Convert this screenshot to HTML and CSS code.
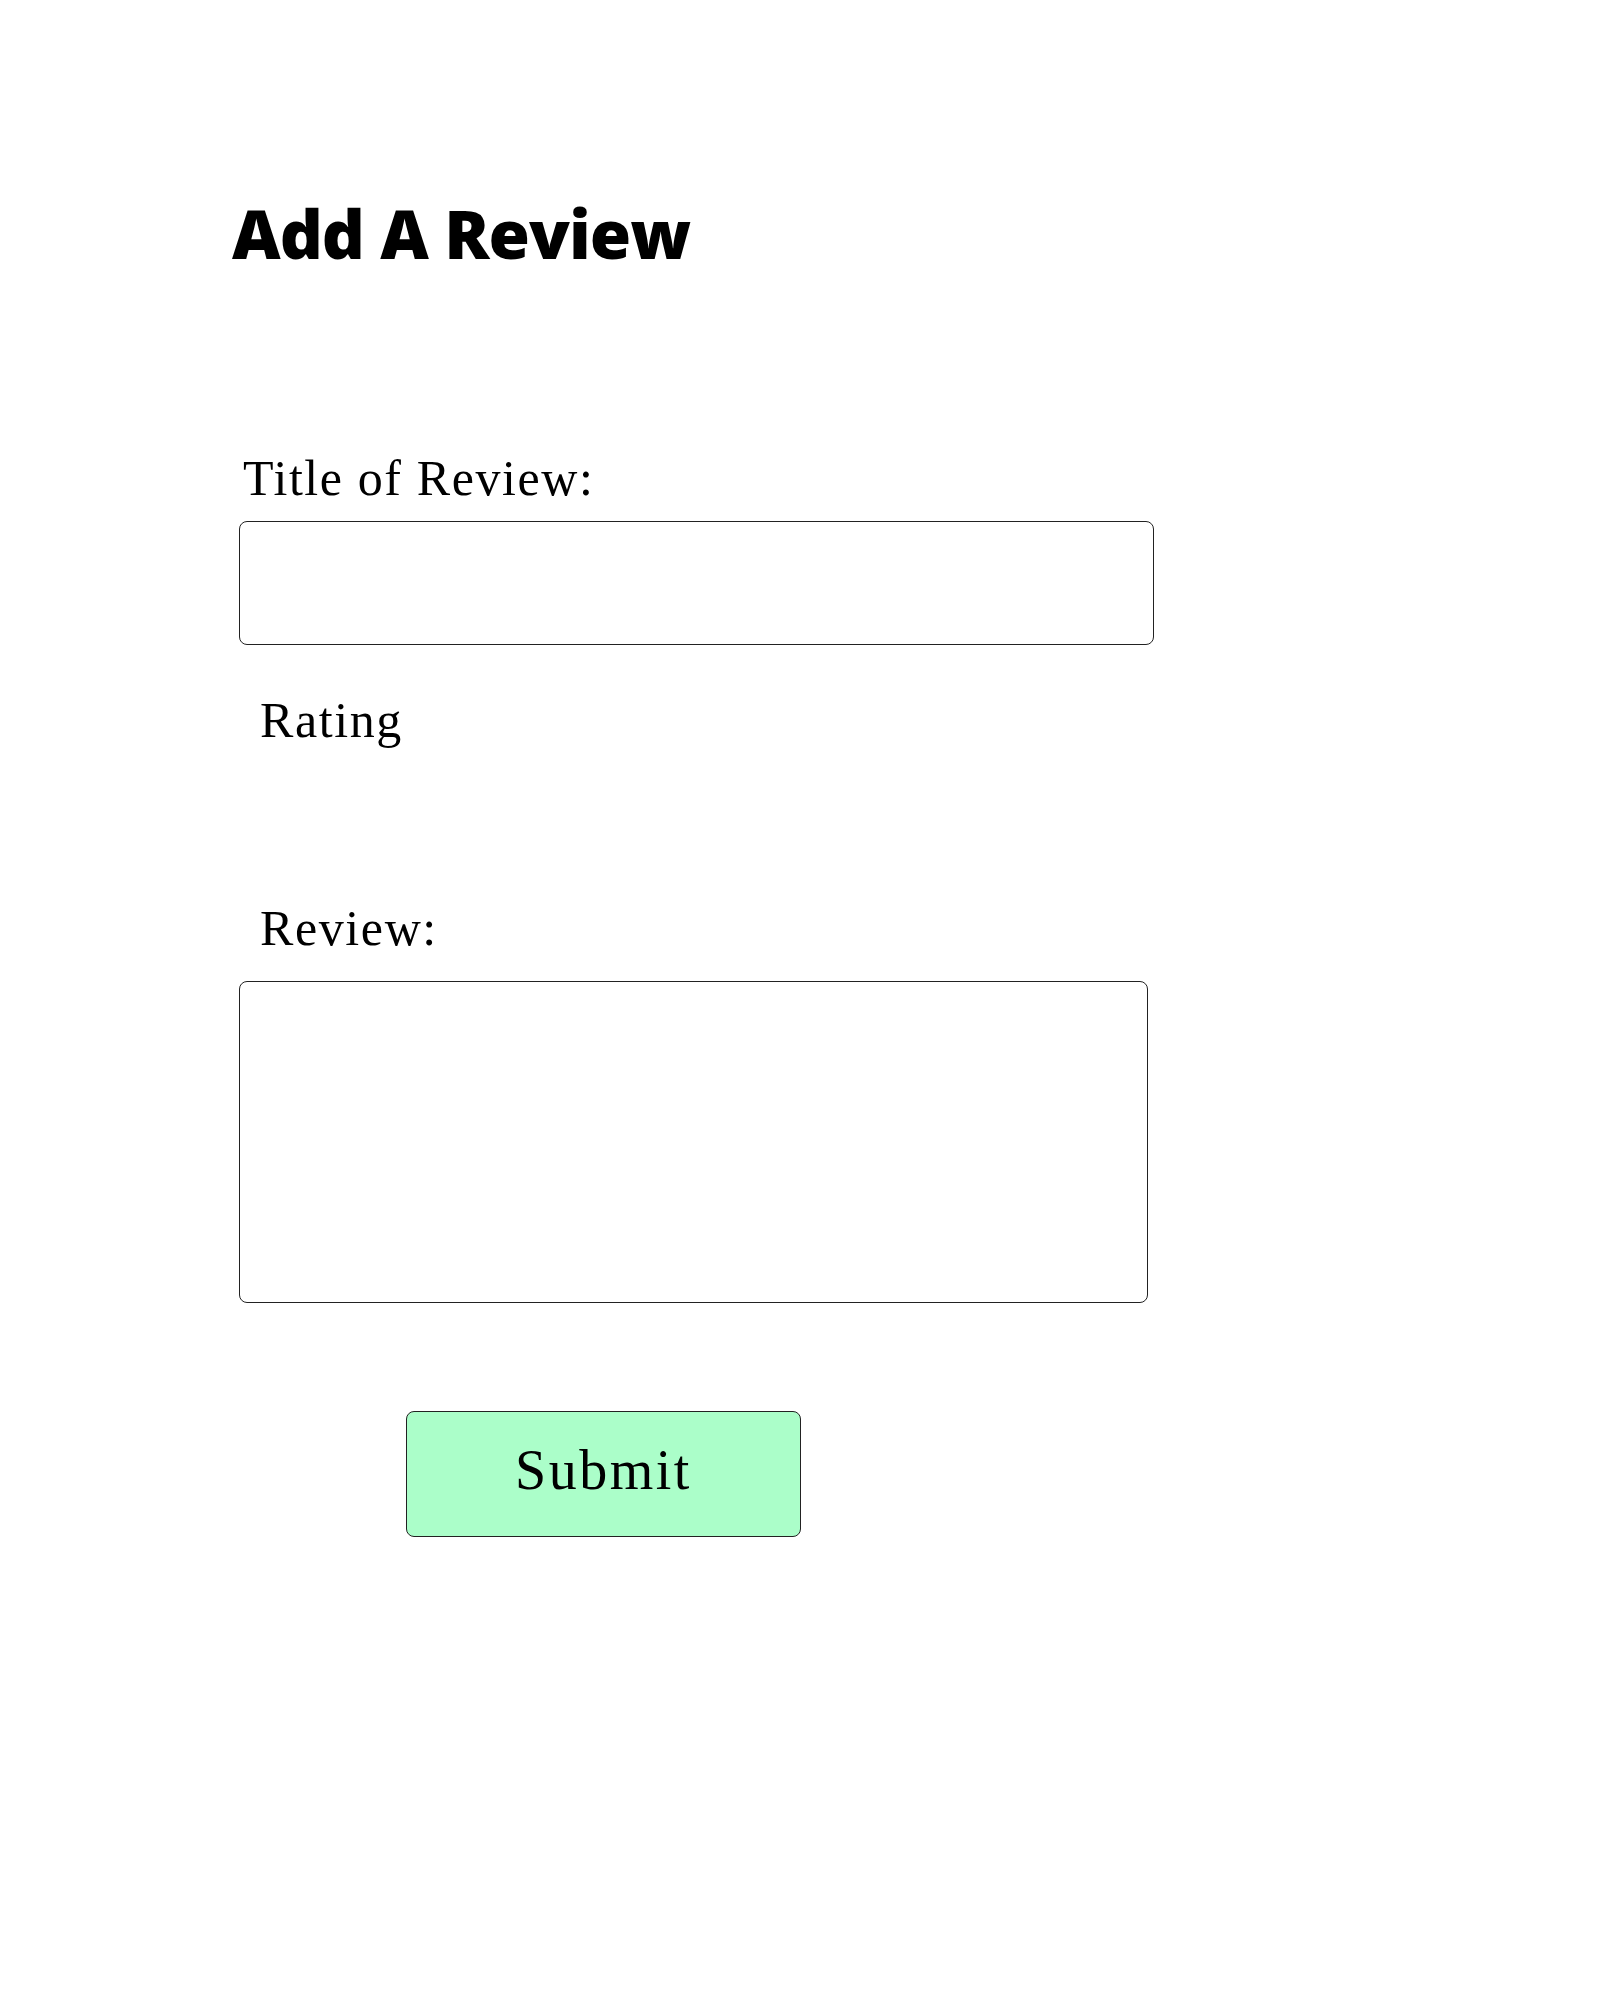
FILE: index.html
```html
<!DOCTYPE html>
<html lang="en">
<head>
<meta charset="utf-8">
<title>Add A Review</title>
<link rel="stylesheet" href="styles.css">
</head>
<body>
<main class="page">
  <h1 class="heading">Add A Review</h1>
  <form class="review-form">
    <label class="label label-title" for="title">Title of Review:</label>
    <input class="field field-title" id="title" type="text">
    <div class="label label-rating">Rating</div>
    <label class="label label-review" for="review">Review:</label>
    <textarea class="field field-review" id="review"></textarea>
    <button class="submit" type="button">Submit</button>
  </form>
</main>
</body>
</html>
```
FILE: styles.css
```css
html, body {
  margin: 0;
  padding: 0;
  background: #ffffff;
}

.page {
  padding-top: 200px;
  padding-left: 232px;
}

.heading {
  margin: 0;
  font-family: "Open Sans", sans-serif;
  font-weight: 800;
  font-size: 67px;
  line-height: 67px;
  color: #000;
  letter-spacing: -1px;
}

.review-form {
  display: flex;
  flex-direction: column;
  align-items: flex-start;
  padding-left: 7px;
}

.label {
  display: block;
  font-family: "Liberation Serif", serif;
  font-size: 50px;
  line-height: 48px;
  color: #000;
  letter-spacing: 1.6px;
}

.label-title {
  margin-top: 187px;
  margin-left: 4px;
}

.label-rating {
  margin-top: 51px;
  margin-left: 21px;
}

.label-review {
  margin-top: 160px;
  margin-left: 21px;
}

.field {
  box-sizing: border-box;
  border: 1px solid #222;
  border-radius: 8px;
  background: #fff;
  margin: 0;
  padding: 0;
  outline: none;
  resize: none;
}

.field-title {
  margin-top: 19px;
  width: 915px;
  height: 124px;
}

.field-review {
  margin-top: 29px;
  width: 909px;
  height: 322px;
}

.submit {
  box-sizing: border-box;
  margin-top: 108px;
  margin-left: 167px;
  width: 395px;
  height: 126px;
  border: 1px solid #222;
  border-radius: 8px;
  background: #abfec9;
  font-family: "Liberation Serif", serif;
  font-size: 56px;
  letter-spacing: 2.5px;
  color: #000;
  padding: 0 0 8px 0;
  cursor: pointer;
}
```
